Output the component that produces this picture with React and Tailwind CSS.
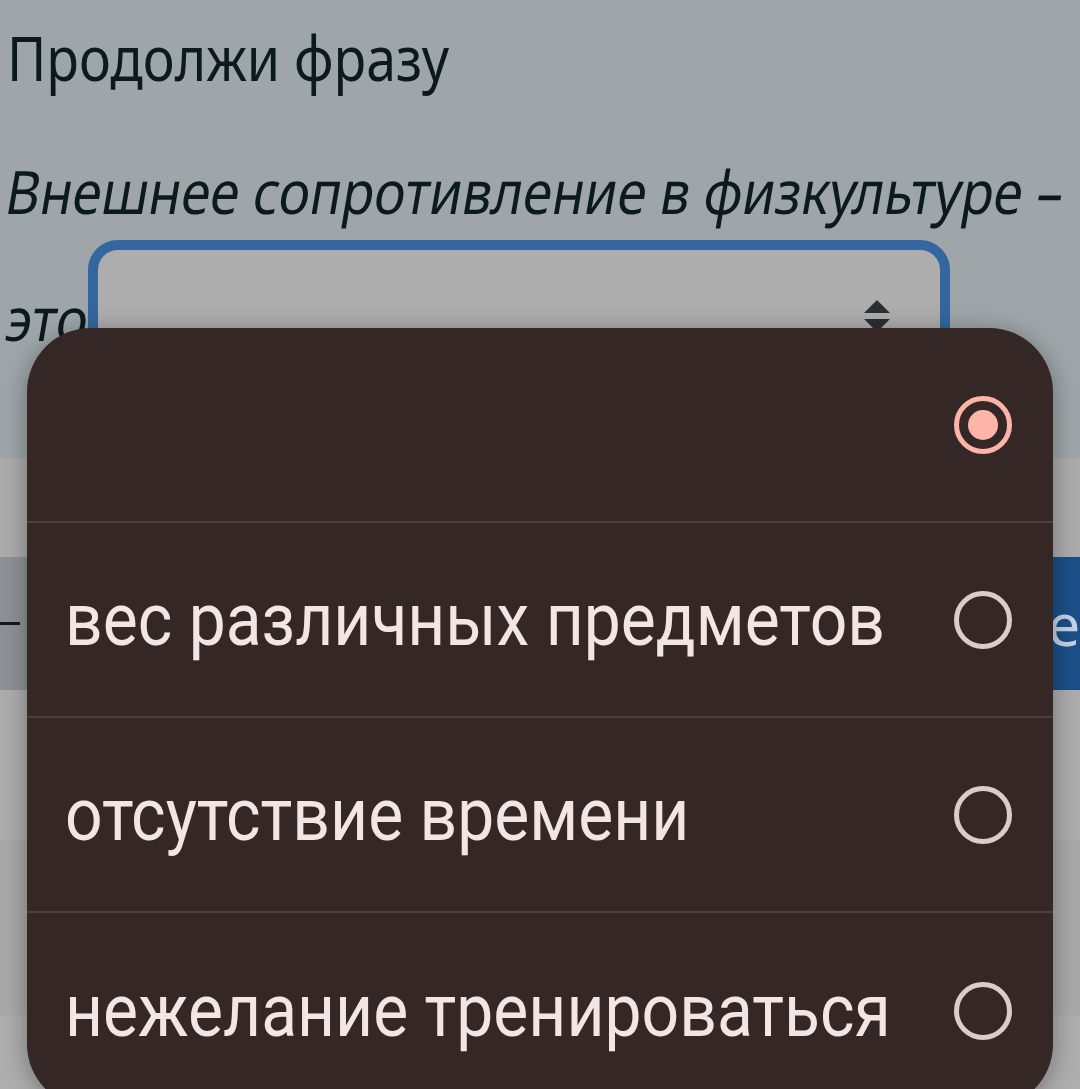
import React from "react";

function Radio({ selected }) {
  return (
    <svg width="60" height="60" viewBox="0 0 60 60" className="shrink-0">
      {selected ? (
        <>
          <circle cx="30" cy="30" r="26.5" fill="none" stroke="#ffb4a8" strokeWidth="5" />
          <circle cx="30" cy="30" r="15" fill="#ffb4a8" />
        </>
      ) : (
        <circle cx="30" cy="30" r="26.5" fill="none" stroke="#dccbc8" strokeWidth="5" />
      )}
    </svg>
  );
}

function Row({ label, selected, last }) {
  return (
    <div
      className={
        "flex items-center pl-[38px] pr-[40px] h-[195px] " +
        (last ? "" : "border-b-2 border-[#4b3f3e]")
      }
    >
      <div className="flex-1 min-w-0">
        <span className="inline-block origin-left scale-x-[0.88] whitespace-nowrap text-[75px] leading-none text-[#f3e5e3] font-['Roboto',sans-serif]">
          {label}
        </span>
      </div>
      <Radio selected={selected} />
    </div>
  );
}

export default function App() {
  return (
    <div className="relative w-[1080px] h-[1089px] overflow-hidden bg-[#9ea6a9] font-['Noto_Sans',sans-serif] text-[#0b1a1c]">
      <div className="h-[458px] flex flex-col">
        <div className="pl-[7px] pt-[17px]">
          <span className="inline-block origin-left scale-x-[0.865] whitespace-nowrap text-[62px] leading-[80px]">
            Продолжи фразу
          </span>
        </div>
        <div className="pl-[13px] pt-[59px]">
          <span className="inline-block origin-top-left scale-y-[1.136] -skew-x-[11deg] whitespace-nowrap text-[52.8px] leading-[62px]">
            Внешнее сопротивление в физкультуре –
          </span>
        </div>
        <div className="flex items-start pl-[7px] pt-[22px]">
          <div className="w-[81px] shrink-0 pt-[43px]">
            <span className="inline-block origin-left scale-x-[0.89] -skew-x-[11deg] whitespace-nowrap text-[60px] leading-[70px]">
              это
            </span>
          </div>
          <div className="w-[862px] h-[150px] rounded-[30px] border-[10px] border-[#34679f] bg-[#adadad] flex items-start justify-end pr-[48px] pt-[48px]">
            <svg width="30" height="36" viewBox="0 0 30 36">
              <polygon points="15,2 28,15 2,15" fill="#2b2f33" />
              <polygon points="2,21 28,21 15,34" fill="#2b2f33" />
            </svg>
          </div>
        </div>
      </div>
      <div className="h-[99px] bg-[#acacac]" />
      <div className="h-[133px] flex">
        <div className="w-1/2 bg-[#8e9296] flex items-center">
          <div className="w-[20px] h-[3px] bg-[#15191c]" />
        </div>
        <div className="w-1/2 bg-[#1c4f88] flex items-center justify-end">
          <span className="text-[58px] leading-none text-[#c3d3e4] font-['Noto_Sans',sans-serif]">Далее</span>
        </div>
      </div>
      <div className="h-[150px] bg-[#adadad]" />
      <div className="h-[175px] bg-[#a9a9a9]" />
      <div className="h-[84px] bg-[#aeaeae]" />

      <div className="absolute left-[27px] top-[328px] w-[1026px] h-[780px] rounded-[64px] bg-[#342726] shadow-[0_4px_24px_rgba(0,0,0,0.35)] overflow-hidden">
        <Row label="" selected />
        <Row label="вес различных предметов" />
        <Row label="отсутствие времени" />
        <Row label="нежелание тренироваться" last />
      </div>
    </div>
  );
}
